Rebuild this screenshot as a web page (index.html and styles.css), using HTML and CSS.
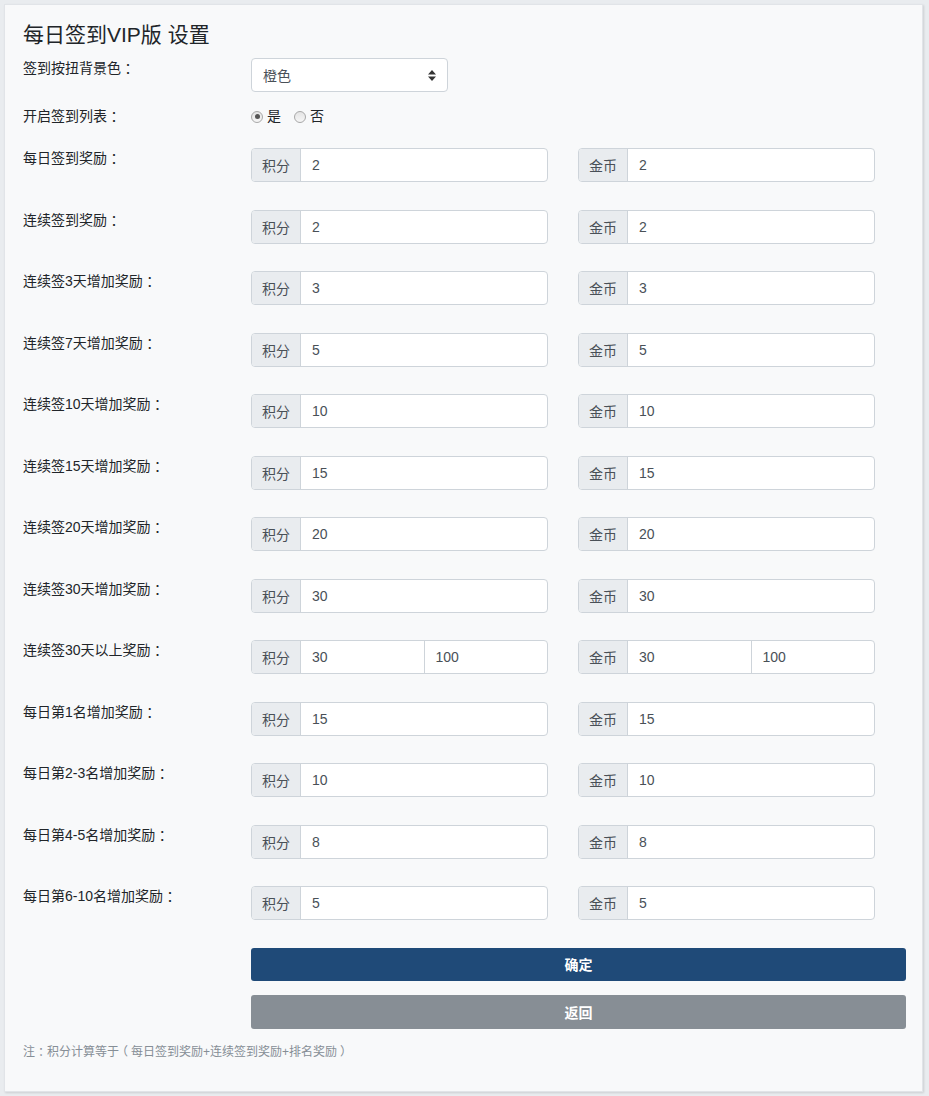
FILE: index.html
```html
<!DOCTYPE html>
<html lang="zh-CN">
<head>
<meta charset="utf-8">
<title>每日签到VIP版 设置</title>
<link rel="stylesheet" href="styles.css">
</head>
<body>
<div class="card">
  <h1 class="title">每日签到VIP版 设置</h1>
  <form class="form">
    <div class="row row-select">
      <label class="label">签到按扭背景色<span class="p">：</span></label>
      <div class="control">
        <div class="select">
          <span class="select-text">橙色</span>
          <svg class="select-arrow" width="8" height="11" viewBox="0 0 8 11"><path d="M4 0 L8 4.5 H0 Z M0 6.5 H8 L4 11 Z" fill="#333"/></svg>
        </div>
      </div>
    </div>
    <div class="row row-radio">
      <label class="label">开启签到列表<span class="p">：</span></label>
      <div class="control radios">
        <span class="radio-item"><span class="radio checked"></span>是</span>
        <span class="radio-item"><span class="radio"></span>否</span>
      </div>
    </div>

    <div class="row row-group">
      <label class="label">每日签到奖励<span class="p">：</span></label>
      <div class="control pair">
        <div class="igroup"><span class="addon">积分</span><span class="field">2</span></div>
        <div class="igroup"><span class="addon">金币</span><span class="field">2</span></div>
      </div>
    </div>
    <div class="row row-group">
      <label class="label">连续签到奖励<span class="p">：</span></label>
      <div class="control pair">
        <div class="igroup"><span class="addon">积分</span><span class="field">2</span></div>
        <div class="igroup"><span class="addon">金币</span><span class="field">2</span></div>
      </div>
    </div>
    <div class="row row-group">
      <label class="label">连续签3天增加奖励<span class="p">：</span></label>
      <div class="control pair">
        <div class="igroup"><span class="addon">积分</span><span class="field">3</span></div>
        <div class="igroup"><span class="addon">金币</span><span class="field">3</span></div>
      </div>
    </div>
    <div class="row row-group">
      <label class="label">连续签7天增加奖励<span class="p">：</span></label>
      <div class="control pair">
        <div class="igroup"><span class="addon">积分</span><span class="field">5</span></div>
        <div class="igroup"><span class="addon">金币</span><span class="field">5</span></div>
      </div>
    </div>
    <div class="row row-group">
      <label class="label">连续签10天增加奖励<span class="p">：</span></label>
      <div class="control pair">
        <div class="igroup"><span class="addon">积分</span><span class="field">10</span></div>
        <div class="igroup"><span class="addon">金币</span><span class="field">10</span></div>
      </div>
    </div>
    <div class="row row-group">
      <label class="label">连续签15天增加奖励<span class="p">：</span></label>
      <div class="control pair">
        <div class="igroup"><span class="addon">积分</span><span class="field">15</span></div>
        <div class="igroup"><span class="addon">金币</span><span class="field">15</span></div>
      </div>
    </div>
    <div class="row row-group">
      <label class="label">连续签20天增加奖励<span class="p">：</span></label>
      <div class="control pair">
        <div class="igroup"><span class="addon">积分</span><span class="field">20</span></div>
        <div class="igroup"><span class="addon">金币</span><span class="field">20</span></div>
      </div>
    </div>
    <div class="row row-group">
      <label class="label">连续签30天增加奖励<span class="p">：</span></label>
      <div class="control pair">
        <div class="igroup"><span class="addon">积分</span><span class="field">30</span></div>
        <div class="igroup"><span class="addon">金币</span><span class="field">30</span></div>
      </div>
    </div>
    <div class="row row-group">
      <label class="label">连续签30天以上奖励<span class="p">：</span></label>
      <div class="control pair">
        <div class="igroup"><span class="addon">积分</span><span class="field half">30</span><span class="field half">100</span></div>
        <div class="igroup"><span class="addon">金币</span><span class="field half">30</span><span class="field half">100</span></div>
      </div>
    </div>
    <div class="row row-group">
      <label class="label">每日第1名增加奖励<span class="p">：</span></label>
      <div class="control pair">
        <div class="igroup"><span class="addon">积分</span><span class="field">15</span></div>
        <div class="igroup"><span class="addon">金币</span><span class="field">15</span></div>
      </div>
    </div>
    <div class="row row-group">
      <label class="label">每日第2-3名增加奖励<span class="p">：</span></label>
      <div class="control pair">
        <div class="igroup"><span class="addon">积分</span><span class="field">10</span></div>
        <div class="igroup"><span class="addon">金币</span><span class="field">10</span></div>
      </div>
    </div>
    <div class="row row-group">
      <label class="label">每日第4-5名增加奖励<span class="p">：</span></label>
      <div class="control pair">
        <div class="igroup"><span class="addon">积分</span><span class="field">8</span></div>
        <div class="igroup"><span class="addon">金币</span><span class="field">8</span></div>
      </div>
    </div>
    <div class="row row-group">
      <label class="label">每日第6-10名增加奖励<span class="p">：</span></label>
      <div class="control pair">
        <div class="igroup"><span class="addon">积分</span><span class="field">5</span></div>
        <div class="igroup"><span class="addon">金币</span><span class="field">5</span></div>
      </div>
    </div>

    <div class="row row-buttons">
      <span class="label"></span>
      <div class="control buttons">
        <button type="button" class="btn btn-primary">确定</button>
        <button type="button" class="btn btn-secondary">返回</button>
      </div>
    </div>
  </form>
  <p class="note">注<span class="p">：</span>积分计算等于<span class="p">（</span>每日签到奖励+连续签到奖励+排名奖励<span class="p">）</span></p>
</div>
</body>
</html>
```

FILE: styles.css
```css
* { box-sizing: border-box; }

html, body {
  margin: 0;
  padding: 0;
}

body {
  background: #e9ecef;
  padding: 4px 6px 5px 4px;
  font-family: "Liberation Sans", "Noto Sans CJK SC", sans-serif;
  font-size: 14px;
  color: #212529;
}

.card {
  background: #f8f9fa;
  border: 1px solid #e1e4e8;
  box-shadow: 1px 1px 2px rgba(0, 0, 0, 0.12);
  padding: 17px 16px 30px 18px;
  min-height: 1087px;
}

.title {
  margin: 0 0 11px 0;
  font-size: 21px;
  line-height: 25px;
  font-weight: normal;
  color: #212529;
}

.form { margin: 0; }

.row {
  display: grid;
  grid-template-columns: 228px 1fr;
  align-items: start;
}

.label {
  display: block;
  line-height: 21px;
  font-size: 14px;
  color: #212529;
}

/* full-width punctuation centred in a 1em cell */
.p {
  display: inline-block;
  width: 1em;
  text-align: center;
  font-feature-settings: "halt";
}

.row-select { margin-bottom: 14px; }
.row-radio { margin-bottom: 21px; }
.row-group { margin-bottom: 27.5px; }

.select {
  width: 197px;
  height: 34px;
  background: #fff;
  border: 1px solid #ced4da;
  border-radius: 4px;
  display: flex;
  align-items: center;
  justify-content: space-between;
  padding: 0 11px 0 11px;
  color: #495057;
}

.select-arrow { display: block; }

.radios {
  display: flex;
  align-items: center;
  height: 21px;
}

.radio-item {
  display: inline-flex;
  align-items: center;
  line-height: 21px;
  margin-right: 13px;
  color: #212529;
}

.radio {
  width: 12px;
  height: 12px;
  border-radius: 50%;
  border: 1px solid #a8a8a8;
  background: linear-gradient(#e4e4e4, #f6f6f6);
  margin-right: 4px;
  position: relative;
}

.radio.checked::after {
  content: "";
  position: absolute;
  left: 2.5px;
  top: 2.5px;
  width: 5px;
  height: 5px;
  border-radius: 50%;
  background: #555;
}

.pair {
  display: grid;
  grid-template-columns: 297px 297px;
  column-gap: 30px;
}

.igroup {
  display: flex;
  height: 34px;
  border: 1px solid #ced4da;
  border-radius: 4px;
  background: #fff;
  overflow: hidden;
}

.addon {
  flex: 0 0 49px;
  background: #e9ecef;
  border-right: 1px solid #ced4da;
  display: flex;
  align-items: center;
  justify-content: center;
  color: #495057;
}

.field {
  flex: 1 1 auto;
  display: flex;
  align-items: center;
  padding-left: 11px;
  color: #495057;
}

.field.half {
  flex: 1 1 0;
}

.field.half + .field.half {
  border-left: 1px solid #ced4da;
}

.buttons {
  display: flex;
  flex-direction: column;
  gap: 14px;
}

.btn {
  display: block;
  width: 100%;
  height: 33.5px;
  border: none;
  border-radius: 3px;
  color: #fff;
  font-family: "Liberation Sans", "Noto Sans CJK SC", sans-serif;
  font-size: 14px;
  font-weight: bold;
  cursor: pointer;
}

.btn-primary { background: #1f4a78; }
.btn-secondary { background: #878e95; }

.note {
  margin: 14px 0 0 0;
  font-size: 12px;
  line-height: 18px;
  color: #868e96;
}
```
